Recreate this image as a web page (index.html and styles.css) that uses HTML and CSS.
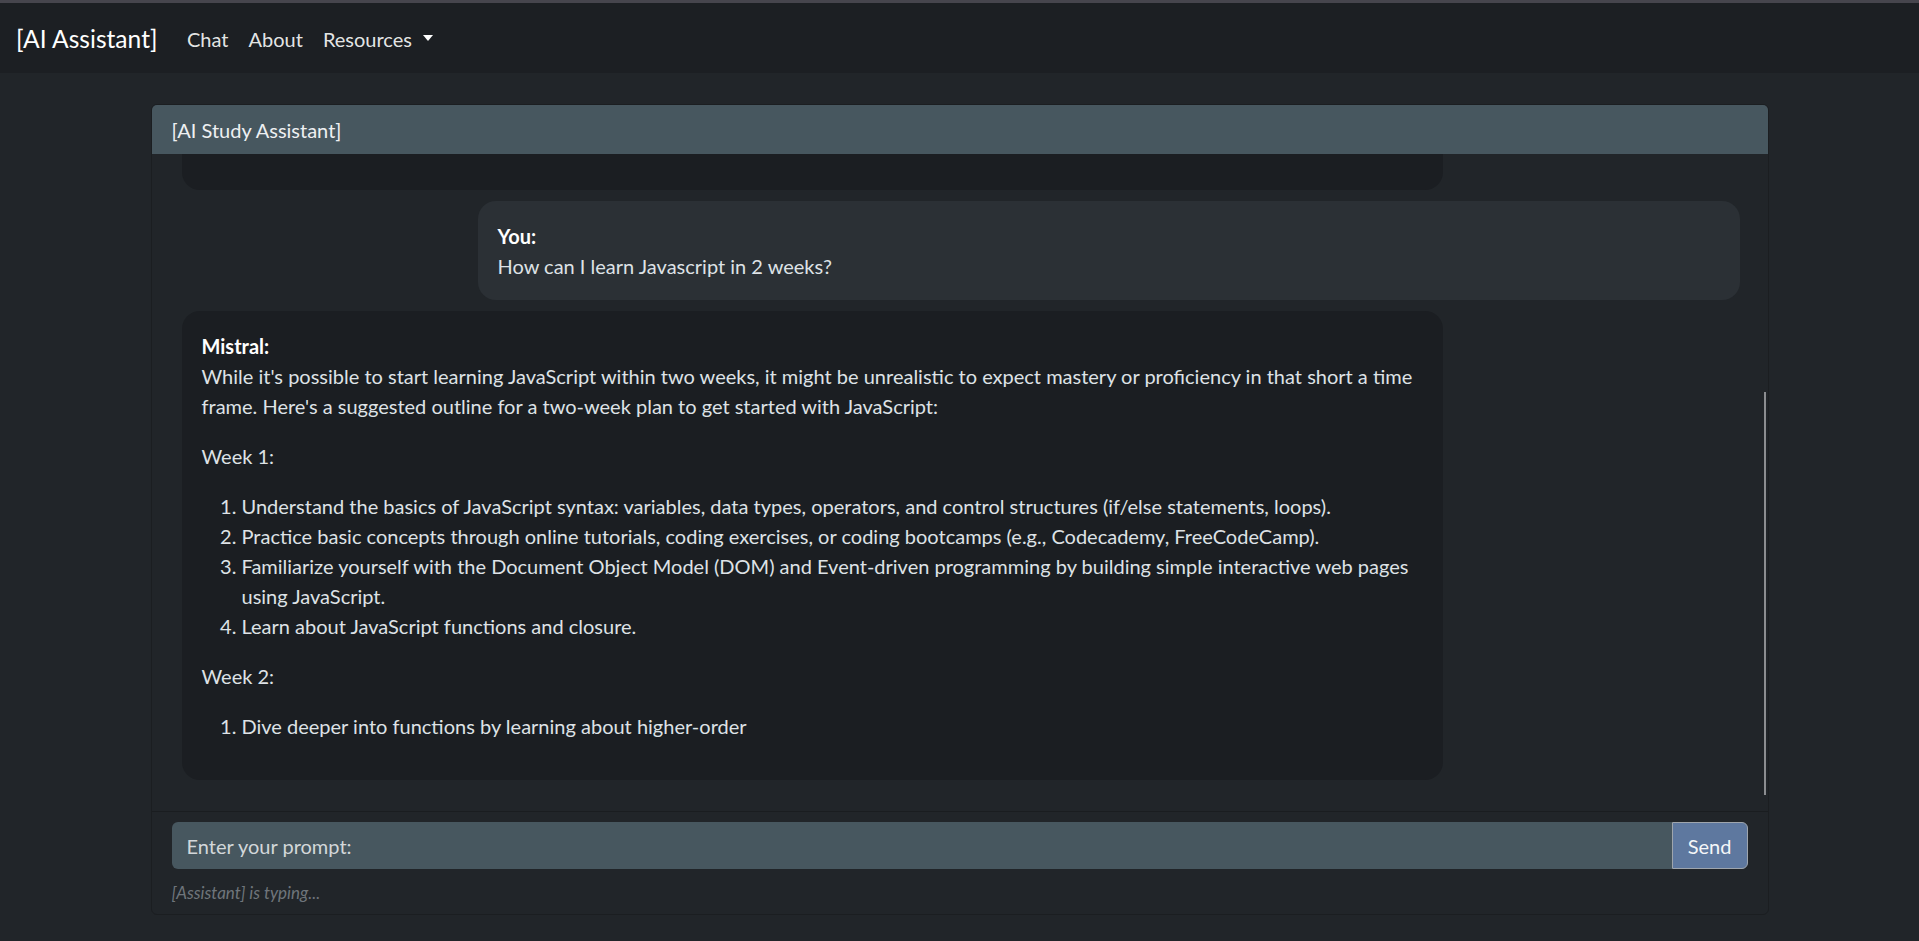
FILE: index.html
```html
<!DOCTYPE html>
<html lang="en">
<head>
<meta charset="utf-8">
<title>AI Assistant</title>
<link rel="stylesheet" href="styles.css">
</head>
<body>
<nav class="navbar">
  <a class="brand" href="#">[AI Assistant]</a>
  <ul class="nav">
    <li><a class="nav-link" href="#">Chat</a></li>
    <li><a class="nav-link" href="#">About</a></li>
    <li><a class="nav-link dropdown-toggle" href="#">Resources<span class="caret"></span></a></li>
  </ul>
</nav>
<main class="container">
  <section class="card">
    <header class="card-header">[AI Study Assistant]</header>
    <div class="chat">
      <div class="messages">
        <div class="bubble bot earlier"></div>
        <div class="bubble user">
          <strong>You:</strong>
          <div class="md">How can I learn Javascript in 2 weeks?</div>
        </div>
        <div class="bubble bot">
          <strong>Mistral:</strong>
          <div class="md">
            <p>While it's possible to start learning JavaScript within two weeks, it might be unrealistic to expect mastery or proficiency in that short a time frame. Here's a suggested outline for a two-week plan to get started with JavaScript:</p>
            <p>Week 1:</p>
            <ol>
              <li>Understand the basics of JavaScript syntax: variables, data types, operators, and control structures (if/else statements, loops).</li>
              <li>Practice basic concepts through online tutorials, coding exercises, or coding bootcamps (e.g., Codecademy, FreeCodeCamp).</li>
              <li>Familiarize yourself with the Document Object Model (DOM) and Event-driven programming by building simple interactive web pages using JavaScript.</li>
              <li>Learn about JavaScript functions and closure.</li>
            </ol>
            <p>Week 2:</p>
            <ol>
              <li>Dive deeper into functions by learning about higher-order</li>
            </ol>
          </div>
        </div>
      </div>
      <div class="scroll-thumb"></div>
    </div>
    <footer class="card-footer">
      <form class="input-group">
        <input class="prompt" type="text" placeholder="Enter your prompt:">
        <button class="send" type="button">Send</button>
      </form>
      <div class="typing">[Assistant] is typing...</div>
    </footer>
  </section>
</main>
</body>
</html>
```
FILE: styles.css
```css
* { box-sizing: border-box; }
html, body { height: 100%; }
body {
  margin: 0;
  background: #212529;
  color: #dee2e6;
  font-family: "Lato", "Liberation Sans", sans-serif;
  font-size: 20px;
  line-height: 30px;
  overflow: hidden;
}
a { text-decoration: none; color: inherit; }

.navbar {
  display: flex;
  align-items: center;
  height: 73px;
  border-top: 3px solid #46454d;
  background: #1c1f23;
  padding: 2px 16px 0;
}
.brand {
  font-size: 24.6px;
  color: #fff;
  margin-right: 19.5px;
  line-height: 36px;
}
.nav {
  display: flex;
  list-style: none;
  margin: 0;
  padding: 0;
}
.nav-link {
  display: flex;
  align-items: center;
  padding: 0 10px;
  color: rgba(255,255,255,0.9);
}
.caret {
  display: inline-block;
  margin-left: 11px;
  border-top: 6px solid #fff;
  border-left: 5px solid transparent;
  border-right: 5px solid transparent;
  position: relative;
  top: -1px;
}

.container {
  width: 1618px;
  margin: 31px auto 0;
}
.card {
  border: 1px solid #1b1e21;
  border-radius: 6px;
  overflow: hidden;
  display: flex;
  flex-direction: column;
}
.card-header {
  height: 49px;
  background: #47575f;
  padding: 0 20px;
  display: flex;
  align-items: center;
  color: #eef0f2;
}
.chat {
  position: relative;
  height: 657px;
  overflow: hidden;
}
.messages {
  height: 100%;
  display: flex;
  flex-direction: column;
  justify-content: flex-end;
  padding: 0 28px 20px 30px;
}
.bubble {
  flex: none;
  width: 81%;
  border-radius: 18px;
  padding: 20px 20px 19px;
  margin-bottom: 11px;
}
.bubble.earlier { height: 140px; }
.bubble.bot { background: #1b1e22; }
.bubble.user { background: #2b3035; margin-left: auto; }
.bubble strong { display: block; font-weight: 700; color: #fff; }
.md p { margin: 0 0 20px; }
.md ol { margin: 0 0 20px; padding-left: 40px; }
.scroll-thumb {
  position: absolute;
  right: 2px;
  top: 238px;
  width: 2px;
  height: 403px;
  background: #8b8d90;
}

.card-footer {
  border-top: 1px solid #1a1d20;
  padding: 10px 20px 8px;
}
.input-group {
  display: flex;
  margin: 0;
  height: 47px;
}
.prompt {
  flex: 1;
  min-width: 0;
  border: none;
  border-radius: 6px 0 0 6px;
  background: #47575f;
  color: #e9ecef;
  font: inherit;
  padding: 0 15px;
  outline: none;
}
.prompt::placeholder { color: #d3d7da; opacity: 1; }
.send {
  width: 76px;
  border: 1px solid #9ea5ad;
  border-radius: 0 6px 6px 0;
  background: #5e789f;
  color: #f4f6f8;
  font: inherit;
  padding: 0;
}
.typing {
  margin-top: 11px;
  font-size: 17px;
  line-height: 26px;
  font-style: italic;
  color: #6f757b;
}
```
